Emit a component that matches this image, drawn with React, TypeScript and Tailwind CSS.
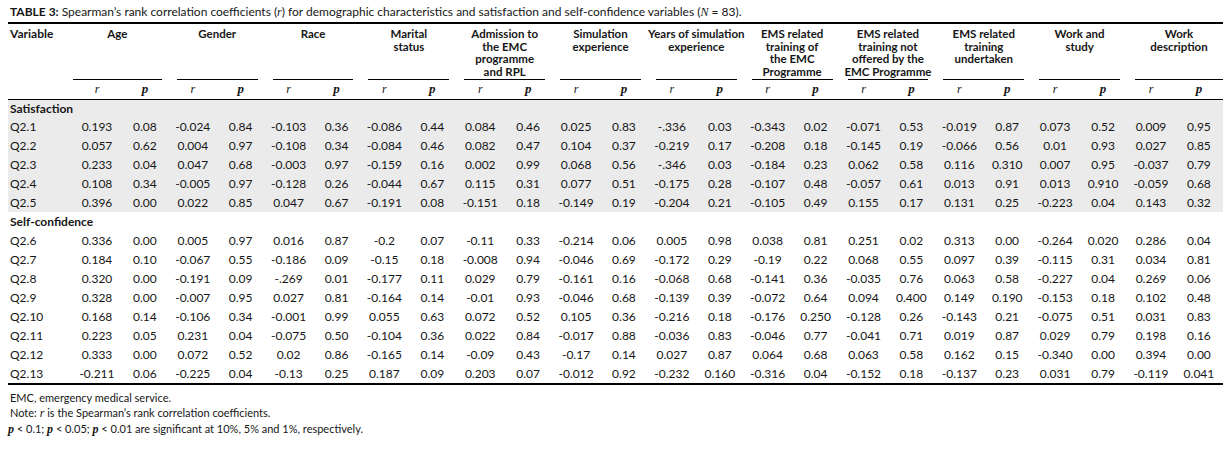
import React from "react";

const groups: string[][] = [
  ["Age"],
  ["Gender"],
  ["Race"],
  ["Marital", "status"],
  ["Admission to", "the EMC", "programme", "and RPL"],
  ["Simulation", "experience"],
  ["Years of simulation", "experience"],
  ["EMS related", "training of", "the EMC", "Programme"],
  ["EMS related", "training not", "offered by the", "EMC Programme"],
  ["EMS related", "training", "undertaken"],
  ["Work and", "study"],
  ["Work", "description"],
];

const satisfaction: [string, string][] = [
  ["Q2.1", "0.193 0.08 -0.024 0.84 -0.103 0.36 -0.086 0.44 0.084 0.46 0.025 0.83 -.336 0.03 -0.343 0.02 -0.071 0.53 -0.019 0.87 0.073 0.52 0.009 0.95"],
  ["Q2.2", "0.057 0.62 0.004 0.97 -0.108 0.34 -0.084 0.46 0.082 0.47 0.104 0.37 -0.219 0.17 -0.208 0.18 -0.145 0.19 -0.066 0.56 0.01 0.93 0.027 0.85"],
  ["Q2.3", "0.233 0.04 0.047 0.68 -0.003 0.97 -0.159 0.16 0.002 0.99 0.068 0.56 -.346 0.03 -0.184 0.23 0.062 0.58 0.116 0.310 0.007 0.95 -0.037 0.79"],
  ["Q2.4", "0.108 0.34 -0.005 0.97 -0.128 0.26 -0.044 0.67 0.115 0.31 0.077 0.51 -0.175 0.28 -0.107 0.48 -0.057 0.61 0.013 0.91 0.013 0.910 -0.059 0.68"],
  ["Q2.5", "0.396 0.00 0.022 0.85 0.047 0.67 -0.191 0.08 -0.151 0.18 -0.149 0.19 -0.204 0.21 -0.105 0.49 0.155 0.17 0.131 0.25 -0.223 0.04 0.143 0.32"],
];

const selfConfidence: [string, string][] = [
  ["Q2.6", "0.336 0.00 0.005 0.97 0.016 0.87 -0.2 0.07 -0.11 0.33 -0.214 0.06 0.005 0.98 0.038 0.81 0.251 0.02 0.313 0.00 -0.264 0.020 0.286 0.04"],
  ["Q2.7", "0.184 0.10 -0.067 0.55 -0.186 0.09 -0.15 0.18 -0.008 0.94 -0.046 0.69 -0.172 0.29 -0.19 0.22 0.068 0.55 0.097 0.39 -0.115 0.31 0.034 0.81"],
  ["Q2.8", "0.320 0.00 -0.191 0.09 -.269 0.01 -0.177 0.11 0.029 0.79 -0.161 0.16 -0.068 0.68 -0.141 0.36 -0.035 0.76 0.063 0.58 -0.227 0.04 0.269 0.06"],
  ["Q2.9", "0.328 0.00 -0.007 0.95 0.027 0.81 -0.164 0.14 -0.01 0.93 -0.046 0.68 -0.139 0.39 -0.072 0.64 0.094 0.400 0.149 0.190 -0.153 0.18 0.102 0.48"],
  ["Q2.10", "0.168 0.14 -0.106 0.34 -0.001 0.99 0.055 0.63 0.072 0.52 0.105 0.36 -0.216 0.18 -0.176 0.250 -0.128 0.26 -0.143 0.21 -0.075 0.51 0.031 0.83"],
  ["Q2.11", "0.223 0.05 0.231 0.04 -0.075 0.50 -0.104 0.36 0.022 0.84 -0.017 0.88 -0.036 0.83 -0.046 0.77 -0.041 0.71 0.019 0.87 0.029 0.79 0.198 0.16"],
  ["Q2.12", "0.333 0.00 0.072 0.52 0.02 0.86 -0.165 0.14 -0.09 0.43 -0.17 0.14 0.027 0.87 0.064 0.68 0.063 0.58 0.162 0.15 -0.340 0.00 0.394 0.00"],
  ["Q2.13", "-0.211 0.06 -0.225 0.04 -0.13 0.25 0.187 0.09 0.203 0.07 -0.012 0.92 -0.232 0.160 -0.316 0.04 -0.152 0.18 -0.137 0.23 0.031 0.79 -0.119 0.041"],
];

const serif = "font-['Liberation_Serif',serif] italic";

function DataRows({ rows, shaded }: { rows: [string, string][]; shaded?: boolean }) {
  return (
    <>
      {rows.map(([label, vals]) => (
        <tr key={label} className={shaded ? "h-[19px] bg-[#ebebeb]" : "h-[19px]"}>
          <td className="pl-[2px] text-left">{label}</td>
          {vals.split(" ").map((v, i) => (
            <td key={i} className="text-center">{v}</td>
          ))}
        </tr>
      ))}
    </>
  );
}

export default function App() {
  return (
    <div className="h-[449px] w-[1227px] bg-white pl-[8px] font-['Lato','Liberation_Sans',sans-serif] text-[12px] leading-[12px] text-[#161616]">
      <div className="flex h-[22px] items-center whitespace-nowrap pl-[2px] pt-[1px]">
        <span className="font-bold">TABLE 3:</span>
        <span className="ml-[3px]">
          Spearman&rsquo;s rank correlation coefficients (<span className={serif}>r</span>) for demographic characteristics and
          satisfaction and self-confidence variables (<span className={serif}>N</span> = 83).
        </span>
      </div>

      <table className="w-[1215px] table-fixed border-collapse">
        <colgroup>
          <col className="w-[65px]" />
          {Array.from({ length: 24 }).map((_, i) => (
            <col key={i} className="w-[47.9px]" />
          ))}
        </colgroup>
        <thead>
          <tr className="border-t-2 border-black">
            <th className="h-[56px] p-0 pl-[2px] pt-[4px] text-left align-top font-bold">Variable</th>
            {groups.map((lines, gi) => (
              <th key={gi} colSpan={2} className="p-0 align-top font-bold">
                <div
                  className={
                    gi === 0
                      ? "mr-[7px] h-[56px] border-b border-black pt-[4px]"
                      : gi === groups.length - 1
                      ? "ml-[8px] h-[56px] border-b border-black pt-[4px]"
                      : "ml-[8px] mr-[7px] h-[56px] border-b border-black pt-[4px]"
                  }
                >
                  <div className="-mx-4 whitespace-nowrap text-center text-[11.5px] leading-[12.5px]">
                    {lines.map((l, li) => (
                      <div key={li}>{l}</div>
                    ))}
                  </div>
                </div>
              </th>
            ))}
          </tr>
          <tr className="h-[19px] border-b border-black">
            <th className="p-0" />
            {Array.from({ length: 12 }).map((_, i) => (
              <React.Fragment key={i}>
                <th className={`p-0 text-center text-[12px] font-normal ${serif}`}>r</th>
                <th className={`p-0 text-center text-[13px] font-bold ${serif}`}>p</th>
              </React.Fragment>
            ))}
          </tr>
        </thead>
        <tbody>
          <tr className="h-[18px] bg-[#ebebeb]">
            <td colSpan={25} className="pl-[2px] pt-[2px] font-bold">Satisfaction</td>
          </tr>
          <DataRows rows={satisfaction} shaded />
          <tr className="h-[19px]">
            <td colSpan={25} className="pl-[2px] font-bold">Self-confidence</td>
          </tr>
          <DataRows rows={selfConfidence} />
        </tbody>
      </table>

      <div className="w-[1215px] border-t-2 border-black pl-[2px] pt-[5px] text-[11px] leading-[15px]">
        <div>EMC, emergency medical service.</div>
        <div>
          Note: <span className={`${serif} text-[12px]`}>r</span> is the Spearman&rsquo;s rank correlation coefficients.
        </div>
        <div className="-ml-[2px]">
          <span className={`${serif} text-[12px] font-bold`}>p</span> &lt; 0.1; <span className={`${serif} text-[12px] font-bold`}>p</span> &lt; 0.05;{" "}
          <span className={`${serif} text-[12px] font-bold`}>p</span> &lt; 0.01 are significant at 10%, 5% and 1%, respectively.
        </div>
      </div>
    </div>
  );
}
